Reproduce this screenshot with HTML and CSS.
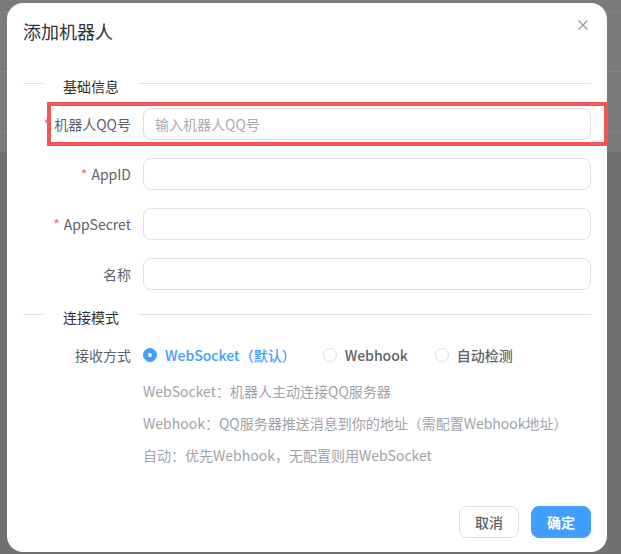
FILE: index.html
```html
<!DOCTYPE html>
<html lang="zh-CN">
<head>
<meta charset="utf-8">
<title>添加机器人</title>
<link rel="stylesheet" href="styles.css">
</head>
<body>
<div class="dialog">
  <div class="dialog-header">
    <span class="dialog-title">添加机器人</span>
    <button class="close-btn" aria-label="关闭">
      <svg viewBox="0 0 10 10" width="10" height="10"><path d="M0.5 0.5 L9.5 9.5 M9.5 0.5 L0.5 9.5" stroke="#909399" stroke-width="1.1" fill="none"/></svg>
    </button>
  </div>
  <div class="dialog-body">
    <div class="divider"><span class="divider-line short"></span><span class="divider-text">基础信息</span><span class="divider-line"></span></div>

    <div class="form-item">
      <label class="form-label"><span class="req">*</span>机器人QQ号</label>
      <div class="form-content"><div class="input"><span class="placeholder">输入机器人QQ号</span></div></div>
    </div>
    <div class="form-item">
      <label class="form-label"><span class="req">*</span>AppID</label>
      <div class="form-content"><div class="input"></div></div>
    </div>
    <div class="form-item">
      <label class="form-label"><span class="req">*</span>AppSecret</label>
      <div class="form-content"><div class="input"></div></div>
    </div>
    <div class="form-item">
      <label class="form-label">名称</label>
      <div class="form-content"><div class="input"></div></div>
    </div>

    <div class="divider"><span class="divider-line short"></span><span class="divider-text">连接模式</span><span class="divider-line"></span></div>

    <div class="form-item radio-item">
      <label class="form-label">接收方式</label>
      <div class="form-content radios">
        <span class="radio checked"><span class="radio-dot"></span><span class="radio-label">WebSocket（默认）</span></span>
        <span class="radio"><span class="radio-dot"></span><span class="radio-label">Webhook</span></span>
        <span class="radio"><span class="radio-dot"></span><span class="radio-label">自动检测</span></span>
      </div>
    </div>
    <div class="desc">
      <div>WebSocket：机器人主动连接QQ服务器</div>
      <div>Webhook：QQ服务器推送消息到你的地址（需配置Webhook地址）</div>
      <div>自动：优先Webhook，无配置则用WebSocket</div>
    </div>
  </div>
  <div class="dialog-footer">
    <button class="btn">取消</button>
    <button class="btn primary">确定</button>
  </div>
</div>
<div class="highlight"></div>
</body>
</html>
```

FILE: styles.css
```css
html, body {
  margin: 0;
  padding: 0;
}
body {
  width: 621px;
  height: 554px;
  overflow: hidden;
  font-family: "Noto Sans CJK SC", "Noto Sans", sans-serif;
  background:
    linear-gradient(to bottom,
      transparent 0, transparent 12px, #858585 12px, #858585 13px, transparent 13px,
      transparent 71px, #858585 71px, #858585 72px, transparent 72px,
      transparent 131px, #858585 131px, #858585 132px, transparent 132px),
    linear-gradient(to bottom, #7b7b7b 0, #7b7b7b 152px, #707070 152px, #707070 100%);
  position: relative;
  padding-top: 3px;
  box-sizing: border-box;
}

.dialog {
  margin-left: 7px;
  width: 600px;
  height: 549px;
  box-sizing: border-box;
  background: #fff;
  border-radius: 16px;
  padding: 16px 16px 14px;
  display: flex;
  flex-direction: column;
}

.dialog-header {
  display: flex;
  justify-content: space-between;
  align-items: flex-start;
  padding-bottom: 16px;
}
.dialog-title {
  font-size: 18px;
  line-height: 24px;
  color: #303133;
}
.close-btn {
  width: 16px;
  height: 16px;
  margin-top: -2px;
  padding: 0;
  border: 0;
  background: none;
  display: flex;
  align-items: center;
  justify-content: center;
}
.close-btn svg { display: block; }

.dialog-body {
  flex: 1;
}

.divider {
  display: flex;
  align-items: center;
  height: 1px;
  margin: 24px 0;
}
.divider-line {
  flex: 1;
  height: 1px;
  background: #dcdfe6;
}
.divider-line.short {
  flex: 0 0 20px;
}
.divider-text {
  padding: 0 20px;
  font-size: 14px;
  font-weight: 400;
  color: #303133;
  line-height: 20px;
  position: relative;
  top: 2px;
}

.form-item {
  display: flex;
  margin-bottom: 18px;
  height: 32px;
}
.form-label {
  width: 120px;
  flex: 0 0 120px;
  box-sizing: border-box;
  padding-right: 12px;
  text-align: right;
  font-size: 14px;
  line-height: 32px;
  color: #606266;
}
.req {
  color: #f56c6c;
  margin-right: 4px;
}
.form-content {
  flex: 1;
  display: flex;
  align-items: center;
}
.input {
  width: 100%;
  height: 32px;
  box-sizing: border-box;
  border: 1px solid #dcdfe6;
  border-radius: 8px;
  padding: 0 11px;
  display: flex;
  align-items: center;
}
.placeholder {
  font-size: 14px;
  color: #a8abb2;
}

.radio-item {
  margin-bottom: 4px;
}
.radios {
  display: flex;
  align-items: center;
}
.radio {
  display: flex;
  align-items: center;
  margin-right: 27px;
  font-size: 14px;
  font-weight: 500;
  color: #606266;
}
.radio-dot {
  width: 14px;
  height: 14px;
  box-sizing: border-box;
  border: 1px solid #dcdfe6;
  border-radius: 50%;
  background: #fff;
  position: relative;
}
.radio.checked .radio-dot {
  background: #409eff;
  border-color: #409eff;
}
.radio.checked .radio-dot::after {
  content: "";
  position: absolute;
  left: 50%;
  top: 50%;
  width: 4px;
  height: 4px;
  margin: -2px 0 0 -2px;
  border-radius: 50%;
  background: #fff;
}
.radio-label {
  padding-left: 8px;
}
.radio.checked .radio-label {
  color: #409eff;
}

.desc {
  padding-left: 120px;
  font-size: 14px;
  line-height: 32px;
  color: #a0a3a8;
}

.dialog-footer {
  display: flex;
  justify-content: flex-end;
  gap: 12px;
}
.btn {
  height: 32px;
  padding: 0 15px;
  border: 1px solid #dcdfe6;
  border-radius: 8px;
  background: #fff;
  color: #606266;
  font-family: inherit;
  font-size: 14px;
  font-weight: 500;
}
.btn.primary {
  background: #409eff;
  border-color: #409eff;
  color: #fff;
  font-weight: 700;
}

.highlight {
  position: absolute;
  left: 47px;
  top: 102px;
  width: 561px;
  height: 44px;
  box-sizing: border-box;
  border: 4px solid #f65555;
}
```
